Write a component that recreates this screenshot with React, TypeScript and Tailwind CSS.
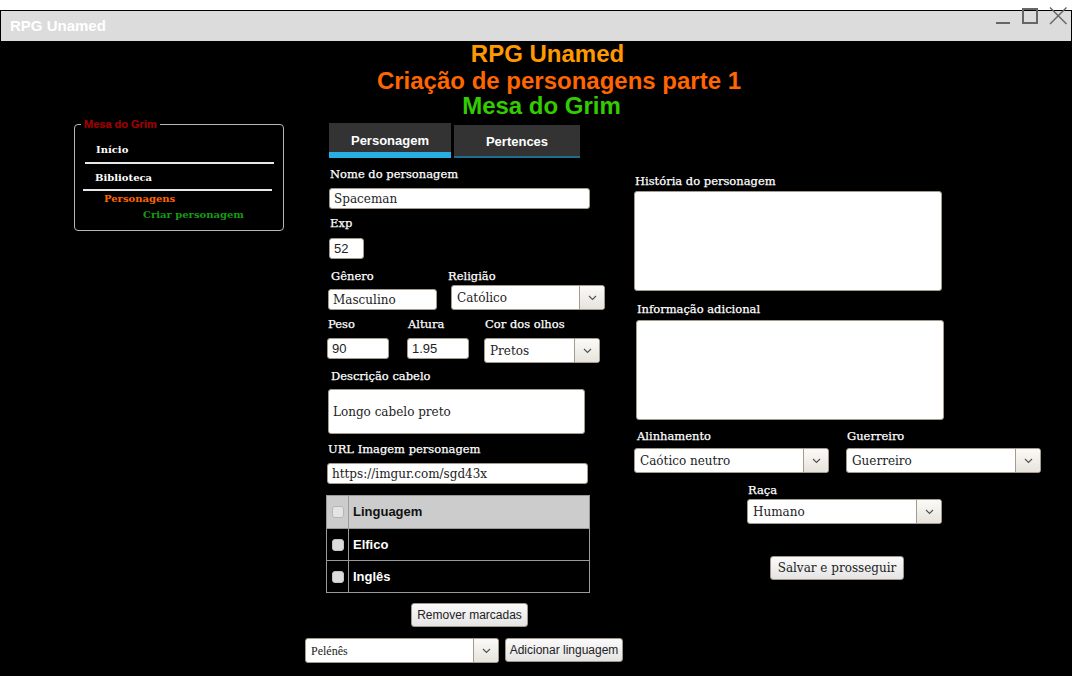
import React from "react";

const Chevron = () => (
  <svg width="9" height="6" viewBox="0 0 9 6">
    <polyline points="1,1 4.5,4.5 8,1" fill="none" stroke="#555" strokeWidth="1.2" />
  </svg>
);

function Select({ value, className, font }: { value: string; className: string; font?: string }) {
  return (
    <div className={`flex h-[25px] border border-[#a39b8d] rounded-[3px] bg-white overflow-hidden ${className}`}>
      <div className={`flex-1 flex items-center pl-[5px] text-[12px] text-[#222] ${font ?? "font-['DejaVu_Serif',serif]"}`}>{value}</div>
      <div className="w-[25px] border-l border-[#a39b8d] bg-linear-to-b from-[#fbfaf7] to-[#e6e4dc] flex items-center justify-center">
        <Chevron />
      </div>
    </div>
  );
}

function Label({ children, className }: { children: React.ReactNode; className?: string }) {
  return (
    <div
      className={`h-[14px] leading-[14px] text-[11.5px] text-white font-['DejaVu_Serif',serif] [-webkit-text-stroke:0.25px_#ffffff] whitespace-nowrap ${className ?? ""}`}
    >
      {children}
    </div>
  );
}

function Input({ value, className, sans }: { value: string; className: string; sans?: boolean }) {
  return (
    <div
      className={`h-[21px] border border-[#a39b8d] rounded-[3px] bg-white flex items-center pl-[4px] text-[#222] whitespace-nowrap ${
        sans ? "text-[13px] font-['Liberation_Sans',Arial,sans-serif]" : "text-[12px] font-['DejaVu_Serif',serif]"
      } ${className}`}
    >
      {value}
    </div>
  );
}

function Button({ children, className }: { children: React.ReactNode; className: string }) {
  return (
    <div
      className={`h-[24px] border border-[#a0978a] rounded-[3px] bg-linear-to-b from-[#fafafa] to-[#e4e4e4] flex items-center justify-center text-[#222] whitespace-nowrap ${className}`}
    >
      {children}
    </div>
  );
}

const Check = ({ light }: { light?: boolean }) => (
  <span
    className={`block w-[12px] h-[12px] rounded-[3px] border ${
      light ? "bg-[#e4e4e4] border-[#b5b5b5]" : "bg-[#dcdcdc] border-[#c4c4c4]"
    }`}
  />
);

export default function App() {
  return (
    <div className="w-[1072px] h-[676px] bg-white relative overflow-hidden">
      <div className="mt-[10px] h-[666px] bg-black pt-[1px] flex flex-col">
        {/* title bar */}
        <div className="mx-[1px] h-[30px] bg-[#dcdcdc] flex items-center pl-[9px] text-white font-bold text-[15px] font-['Liberation_Sans',Arial,sans-serif]">
          RPG Unamed
        </div>

        {/* header */}
        <div className="text-center font-bold text-[24px] font-['Liberation_Sans',Arial,sans-serif] whitespace-nowrap">
          <div className="h-[26px] leading-[26px] pl-[23px] text-[#ff9900]">RPG Unamed</div>
          <div className="h-[26px] leading-[26px] mt-[1px] pl-[46px] text-[#ff6600]">Criação de personagens parte 1</div>
          <div className="h-[24px] leading-[24px] pl-[11px] text-[#33cc00]">Mesa do Grim</div>
        </div>

        {/* main */}
        <div className="flex items-start">
          {/* sidebar */}
          <div className="relative ml-[74px] mt-[6px] w-[210px] h-[107px] border border-[#b8b8b8] rounded-[4px] font-['DejaVu_Serif',serif] font-bold text-[10px]">
            <span className="absolute -top-[7px] left-[6px] px-[3px] bg-black h-[12px] leading-[12px] text-[11px] font-bold text-[#a00000] font-['Liberation_Sans',Arial,sans-serif] [-webkit-text-stroke:0.2px_#a00000] whitespace-nowrap">
              Mesa do Grim
            </span>
            <div className="h-[14px] leading-[14px] mt-[18px] ml-[21px] text-white">Início</div>
            <div className="h-[2px] w-[189px] ml-[10px] mt-[5px] bg-[#e8e8e8]" />
            <div className="h-[14px] leading-[14px] mt-[7px] ml-[20px] text-white">Biblioteca</div>
            <div className="h-[2px] w-[189px] ml-[8px] mt-[4px] bg-[#e8e8e8]" />
            <div className="h-[14px] leading-[14px] mt-[1px] ml-[29px] text-[#ff6600]">Personagens</div>
            <div className="h-[14px] leading-[14px] mt-[2px] ml-[68px] text-[#169b16]">Criar personagem</div>
          </div>

          {/* left column */}
          <div className="ml-[21px] mt-[5px] w-[320px] flex flex-col items-start">
            <div className="ml-[24px] flex items-end gap-[3px] font-['Liberation_Sans',Arial,sans-serif] font-bold text-[13px] text-white">
              <div className="w-[122px] h-[35px] bg-[#333333] border-b-[6px] border-[#29aee2] flex items-center justify-center pt-[6px]">
                Personagem
              </div>
              <div className="w-[126px] h-[33px] bg-[#333333] border-b-[2px] border-[#1d6d8c] flex items-center justify-center pt-[2px]">
                Pertences
              </div>
            </div>

            <Label className="ml-[25px] mt-[9px]">Nome do personagem</Label>
            <Input value="Spaceman" className="ml-[24px] mt-[7px] w-[261px]" />
            <Label className="ml-[25px] mt-[7px]">Exp</Label>
            <Input value="52" sans className="ml-[24px] mt-[8px] w-[35px]" />

            <div className="flex ml-[23px] mt-[10px]">
              <div className="w-[109px]">
                <Label className="ml-[3px]">Gênero</Label>
                <Input value="Masculino" className="mt-[6px] w-[109px]" />
              </div>
              <div className="ml-[11px]">
                <Label>Religião</Label>
                <Select value="Católico" className="ml-[3px] mt-[2px] w-[154px]" />
              </div>
            </div>

            <div className="flex ml-[22px] mt-[7px]">
              <div className="w-[62px]">
                <Label className="ml-[1px]">Peso</Label>
                <Input value="90" sans className="mt-[7px] w-[62px]" />
              </div>
              <div className="w-[62px] ml-[18px]">
                <Label className="ml-[1px]">Altura</Label>
                <Input value="1.95" sans className="mt-[7px] w-[62px]" />
              </div>
              <div className="ml-[15px]">
                <Label className="ml-[1px]">Cor dos olhos</Label>
                <Select value="Pretos" className="mt-[7px] w-[116px]" />
              </div>
            </div>

            <Label className="ml-[26px] mt-[6px]">Descrição cabelo</Label>
            <div className="ml-[23px] mt-[6px] w-[257px] h-[45px] border border-[#a39b8d] rounded-[3px] bg-white flex items-center pl-[4px] text-[12px] text-[#222] font-['DejaVu_Serif',serif]">
              Longo cabelo preto
            </div>

            <Label className="ml-[23px] mt-[8px]">URL Imagem personagem</Label>
            <Input value="https://imgur.com/sgd43x" className="ml-[22px] mt-[7px] w-[261px]" />

            <div className="ml-[21px] mt-[11px] w-[264px] border border-[#9a9a9a] font-['Liberation_Sans',Arial,sans-serif] font-bold text-[13px]">
              <div className="flex h-[33px] bg-[#cccccc] border-b border-[#9a9a9a]">
                <div className="w-[22px] border-r border-[#9a9a9a] flex items-center justify-center">
                  <Check light />
                </div>
                <div className="flex items-center pl-[4px] text-[#111]">Linguagem</div>
              </div>
              <div className="flex h-[32px] border-b border-[#9a9a9a]">
                <div className="w-[22px] border-r border-[#9a9a9a] flex items-center justify-center">
                  <Check />
                </div>
                <div className="flex items-center pl-[4px] text-white">Elfico</div>
              </div>
              <div className="flex h-[31px]">
                <div className="w-[22px] border-r border-[#9a9a9a] flex items-center justify-center">
                  <Check />
                </div>
                <div className="flex items-center pl-[4px] text-white">Inglês</div>
              </div>
            </div>

            <Button className="ml-[106px] mt-[10px] w-[117px] text-[12px] font-['Liberation_Sans',Arial,sans-serif]">
              Remover marcadas
            </Button>

            <div className="flex mt-[11px]">
              <Select value="Pelénês" className="w-[194px]" font="font-['Liberation_Serif',serif]" />
              <Button className="ml-[6px] w-[118px] text-[12px] font-['Liberation_Sans',Arial,sans-serif]">
                Adicionar linguagem
              </Button>
            </div>
          </div>

          {/* right column */}
          <div className="ml-[9px] mt-[56px] flex flex-col items-start">
            <Label className="ml-[1px]">História do personagem</Label>
            <div className="mt-[3px] w-[308px] h-[100px] border border-[#a39b8d] rounded-[3px] bg-white" />
            <Label className="ml-[3px] mt-[11px]">Informação adicional</Label>
            <div className="ml-[2px] mt-[4px] w-[308px] h-[100px] border border-[#a39b8d] rounded-[3px] bg-white" />

            <div className="flex mt-[9px]">
              <div className="w-[195px]">
                <Label className="ml-[3px]">Alinhamento</Label>
                <Select value="Caótico neutro" className="mt-[5px] w-[195px]" />
              </div>
              <div className="ml-[17px]">
                <Label className="ml-[1px]">Guerreiro</Label>
                <Select value="Guerreiro" className="mt-[5px] w-[195px]" />
              </div>
            </div>

            <Label className="ml-[114px] mt-[10px]">Raça</Label>
            <Select value="Humano" className="ml-[113px] mt-[2px] w-[195px]" />

            <Button className="ml-[136px] mt-[32px] w-[134px] text-[12px] font-['DejaVu_Serif',serif]">
              Salvar e prosseguir
            </Button>
          </div>
        </div>
      </div>

      {/* window controls */}
      <svg className="absolute left-[990px] top-0" width="82" height="30" viewBox="0 0 82 30">
        <line x1="6" y1="23" x2="20" y2="23" stroke="#666" strokeWidth="2" />
        <rect x="33" y="9" width="14" height="14" fill="none" stroke="#666" strokeWidth="2" />
        <line x1="60" y1="7.5" x2="76.5" y2="24" stroke="#666" strokeWidth="1.5" />
        <line x1="76.5" y1="7.5" x2="60" y2="24" stroke="#666" strokeWidth="1.5" />
      </svg>
    </div>
  );
}
